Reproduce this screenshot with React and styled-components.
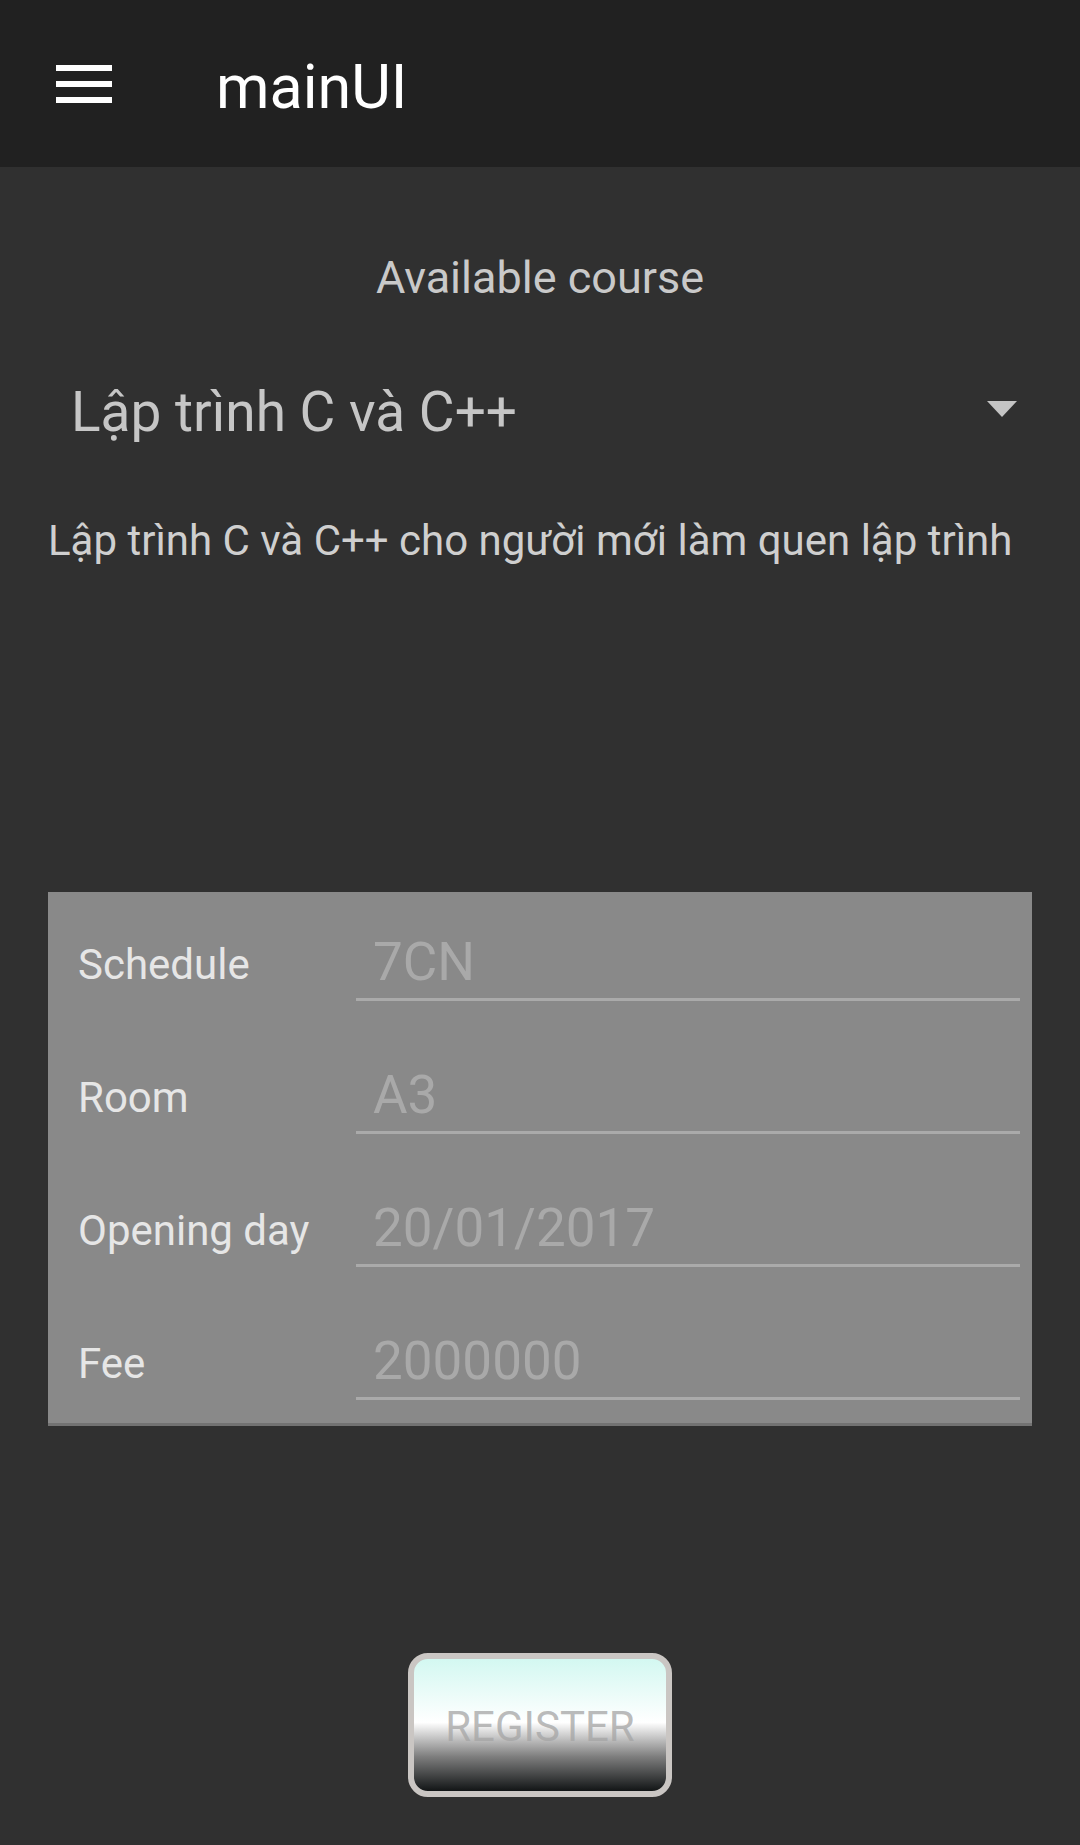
import React from "react";
import styled, { createGlobalStyle } from "styled-components";

const Global = createGlobalStyle`
  html, body { margin: 0; padding: 0; background: #303030; }
  body { font-family: Roboto, "Noto Sans", "Liberation Sans", sans-serif; }
  #root { min-height: 1845px; background: #303030; }
`;

const Toolbar = styled.header`
  height: 167px;
  background: #212121;
  display: flex;
  align-items: center;
  padding-left: 56px;
  box-sizing: border-box;
`;

const MenuButton = styled.div`
  width: 56px;
  height: 38px;
  display: flex;
`;

const Title = styled.h1`
  margin: 6px 0 0 104px;
  font-weight: 400;
  font-size: 61px;
  line-height: 70px;
  color: #ffffff;
`;

const Content = styled.main`
  padding: 0 48px;
  display: flex;
  flex-direction: column;
`;

const Heading = styled.div`
  margin-top: 85px;
  text-align: center;
  font-size: 45px;
  line-height: 52px;
  color: #c9c9c9;
`;

const Spinner = styled.div`
  margin-top: 76px;
  display: flex;
  align-items: center;
  justify-content: space-between;
  padding: 0 15px 0 23px;
`;

const SpinnerText = styled.span`
  font-size: 55px;
  line-height: 64px;
  color: #c6c6c6;
`;

const Caret = styled.svg`
  width: 30px;
  height: 16px;
  margin-top: -6px;
`;

const Description = styled.p`
  margin: 72px 0 0 0;
  font-size: 42px;
  line-height: 50px;
  color: #cfcfcf;
  white-space: nowrap;
`;

const Card = styled.section`
  margin-top: 326px;
  background: #898989;
  border-bottom: 3px solid #727272;
  padding: 9px 12px 23px 30px;
  display: flex;
  flex-direction: column;
  gap: 33px;
`;

const Row = styled.div`
  display: grid;
  grid-template-columns: 278px 1fr;
  align-items: end;
  height: 100px;
`;

const Label = styled.label`
  font-size: 42px;
  line-height: 50px;
  color: #e6e6e6;
  margin-bottom: 11px;
  white-space: nowrap;
`;

const Field = styled.div`
  height: 100px;
  box-sizing: border-box;
  border-bottom: 3px solid #aaaaaa;
  display: flex;
  align-items: flex-end;
  padding: 0 0 6px 17px;
  font-size: 53px;
  line-height: 60px;
  color: #a9a9a9;
`;

const ButtonWrap = styled.div`
  margin-top: 227px;
  display: flex;
  justify-content: center;
`;

const RegisterButton = styled.button`
  width: 264px;
  height: 144px;
  box-sizing: border-box;
  border: 6px solid #cac6c3;
  border-radius: 20px;
  background: linear-gradient(180deg, #d3f8f1 0%, #ffffff 48%, #7e7e7e 74%, #121516 100%);
  font-family: Roboto, "Noto Sans", sans-serif;
  font-size: 42px;
  color: rgba(165, 165, 165, 0.75);
  padding: 2px 0 0 0;
  cursor: pointer;
`;

const rows = [
  ["Schedule", "7CN"],
  ["Room", "A3"],
  ["Opening day", "20/01/2017"],
  ["Fee", "2000000"],
];

export default function App() {
  return (
    <>
      <Global />
      <Toolbar>
        <MenuButton>
          <svg width="56" height="38" viewBox="0 0 56 38">
            <rect x="0" y="0" width="56" height="6" fill="#fff" />
            <rect x="0" y="16" width="56" height="6" fill="#fff" />
            <rect x="0" y="32" width="56" height="6" fill="#fff" />
          </svg>
        </MenuButton>
        <Title>mainUI</Title>
      </Toolbar>
      <Content>
        <Heading>Available course</Heading>
        <Spinner>
          <SpinnerText>Lập trình C và C++</SpinnerText>
          <Caret viewBox="0 0 30 16">
            <polygon points="0,0 30,0 15,16" fill="#c4c4c4" />
          </Caret>
        </Spinner>
        <Description>Lập trình C và C++ cho người mới làm quen lập trình</Description>
        <Card>
          {rows.map(([label, value]) => (
            <Row key={label}>
              <Label>{label}</Label>
              <Field>{value}</Field>
            </Row>
          ))}
        </Card>
        <ButtonWrap>
          <RegisterButton>REGISTER</RegisterButton>
        </ButtonWrap>
      </Content>
    </>
  );
}
